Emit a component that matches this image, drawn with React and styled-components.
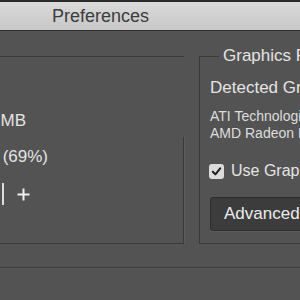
import React from 'react'
import styled, { createGlobalStyle } from 'styled-components'

const GlobalStyle = createGlobalStyle`
  html, body {
    margin: 0;
    padding: 0;
    background: #535353;
  }
  body {
    font-family: "Liberation Sans", Arial, sans-serif;
    color: #e4e4e4;
  }
`

const Window = styled.div`
  width: 300px;
  height: 300px;
  overflow: hidden;
  background: #535353;
`

const TitleBar = styled.div`
  height: 28px;
  border-top: 2px solid #2a2a2a;
  border-bottom: 1px solid #2f2f2f;
  background: linear-gradient(#dadada, #c7c7c7);
  padding-left: 52px;
  font-size: 18px;
  line-height: 28px;
  color: #3c3c3c;
`

const Body = styled.div`
  display: flex;
  align-items: stretch;
  gap: 15px;
  padding-top: 15px;
`

const LeftGroup = styled.div`
  flex: 0 0 184px;
  margin-top: 10px;
  display: flex;
  flex-direction: column;
  border-top: 1px solid #3a3a3a;
  border-bottom: 1px solid #3a3a3a;
  box-sizing: border-box;
`

const Line = styled.div`
  width: ${p => p.end}px;
  display: flex;
  justify-content: flex-end;
  white-space: nowrap;
  font-size: 17px;
  line-height: 20px;
  margin-top: ${p => p.top || 0}px;
`

const SliderBox = styled.div`
  flex: 1;
  margin-top: 6px;
  padding-top: 10px;
  border-right: 1px solid #3a3a3a;
  box-shadow: 1px 0 0 #5c5c5c;
`

const SliderRow = styled.div`
  display: flex;
  align-items: center;
  gap: 13px;
  margin-top: 16px;
`

const Field = styled.div`
  width: 30px;
  height: 22px;
  margin-left: -28px;
  border: 1px solid #dcdcdc;
  border-width: 0 2px 0 0;
`

const RightGroup = styled.fieldset`
  flex: 1 0 auto;
  margin: 0 -60px 0 0;
  height: 198px;
  box-sizing: border-box;
  padding: 0 0 0 10px;
  border: 1px solid #3a3a3a;
  min-width: 0;
`

const Legend = styled.legend`
  margin-left: 9px;
  padding: 0 4px;
  font-size: 17px;
  line-height: 20px;
  white-space: nowrap;
`

const Label = styled.div`
  font-size: 17px;
  line-height: 20px;
  margin-top: 12px;
  white-space: nowrap;
`

const GpuInfo = styled.div`
  font-size: 14px;
  line-height: 17px;
  margin-top: 10px;
  white-space: nowrap;
  color: #dedede;
`

const CheckRow = styled.label`
  display: flex;
  align-items: center;
  gap: 7px;
  margin-top: 19px;
  height: 20px;
  font-size: 16px;
  white-space: nowrap;
`

const Box = styled.span`
  width: 15px;
  height: 15px;
  margin-left: -1px;
  border-radius: 3px;
  background: #dcdcdc;
  display: flex;
  align-items: center;
  justify-content: center;
`

const Button = styled.button`
  display: block;
  margin-top: 16px;
  height: 34px;
  width: 160px;
  padding: 0 0 0 13px;
  text-align: left;
  background: #3c3c3c;
  border: 1px solid #2c2c2c;
  border-radius: 3px;
  box-shadow: 0 1px 0 #5e5e5e;
  color: #ececec;
  font-family: inherit;
  font-size: 17px;
  white-space: nowrap;
`

const Divider = styled.div`
  margin-top: 23px;
  border-top: 1px solid #3a3a3a;
  box-shadow: 0 1px 0 #5a5a5a;
`

const App = () => {
  return (
    <Window>
      <GlobalStyle />
      <TitleBar>Preferences</TitleBar>
      <Body>
        <LeftGroup>
          <Line end={26} top={54}>Ideal Range: 9011-11797 MB</Line>
          <SliderBox>
            <Line end={48}>Let Photoshop Use: 11302 MB (69%)</Line>
            <SliderRow>
              <Field />
              <svg width="13" height="13" viewBox="0 0 13 13">
                <path d="M6.5 0.5v12M0.5 6.5h12" stroke="#f0f0f0" strokeWidth="2" fill="none" />
              </svg>
            </SliderRow>
          </SliderBox>
        </LeftGroup>
        <RightGroup>
          <Legend>Graphics Processor Settings</Legend>
          <Label>Detected Graphics Processor:</Label>
          <GpuInfo>
            <div>ATI Technologies Inc.</div>
            <div>AMD Radeon Pro 560 OpenGL Engine</div>
          </GpuInfo>
          <CheckRow>
            <Box>
              <svg width="11" height="11" viewBox="0 0 11 11">
                <path d="M1.8 5.8l2.6 2.6 4.8-6" stroke="#1e1e1e" strokeWidth="2" fill="none" strokeLinecap="round" strokeLinejoin="round" />
              </svg>
            </Box>
            Use Graphics Processor
          </CheckRow>
          <Button>Advanced Settings...</Button>
        </RightGroup>
      </Body>
      <Divider />
    </Window>
  )
}

export default App
